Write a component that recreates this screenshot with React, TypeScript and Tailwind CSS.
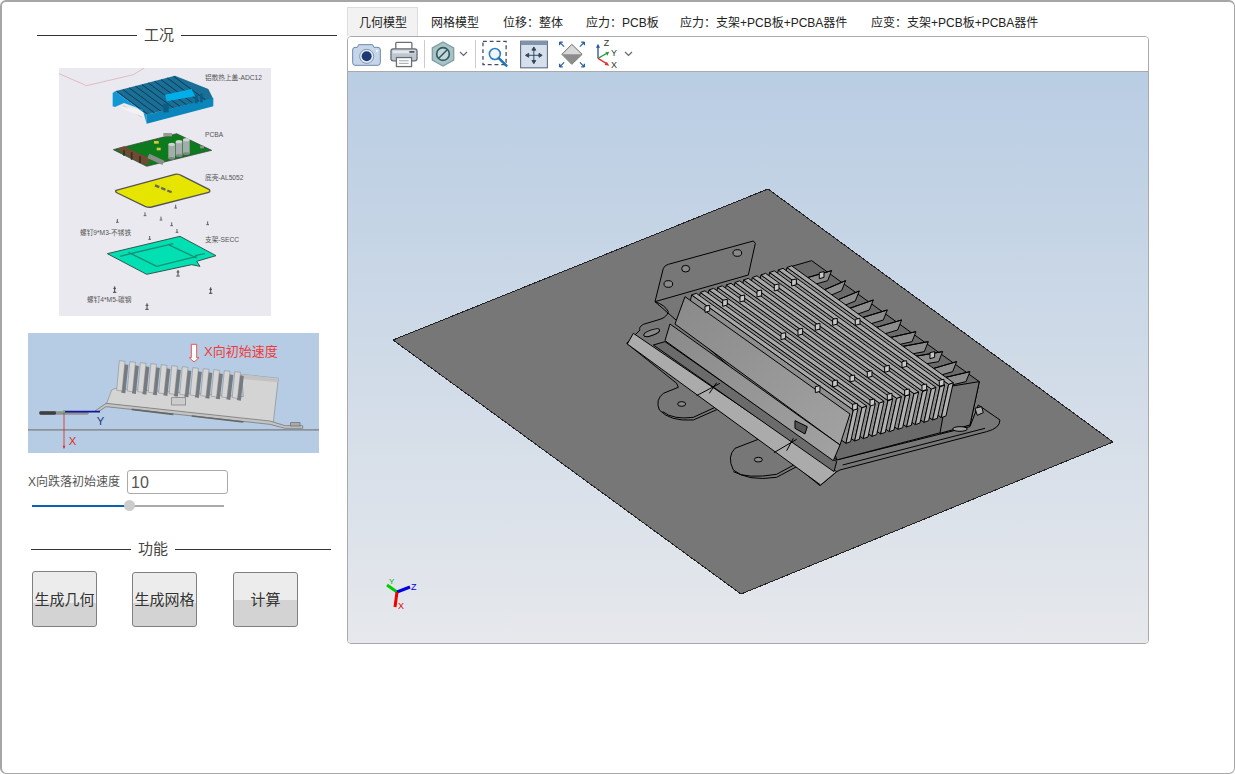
import { useState } from 'react';

const tabs = ['几何模型', '网格模型', '位移：整体', '应力：PCB板', '应力：支架+PCB板+PCBA器件', '应变：支架+PCB板+PCBA器件'];

// 散热片：12 片，从右上往左下画，近的压住远的
const fins = Array.from({ length: 12 }, (_, i) => 11 - i).map((i) => ({
  x0: 215 + i * 26,
  y0: 195 - i * 7.5,
  x1: 700 + i * 26,
  y1: 540 - i * 7,
}));

const pegs = [
  [262, 236], [315, 218], [367, 205], [418, 190], [470, 172], [522, 157], [605, 135],
  [490, 318], [541, 305], [593, 290], [645, 275], [713, 275], [593, 477], [645, 460],
  [697, 445], [749, 432], [801, 416], [853, 402], [937, 375], [705, 530], [757, 517],
  [809, 500], [861, 487], [913, 472], [965, 458],
];

const ledges = [
  [555, 145, 635, 122], [600, 185, 677, 152], [640, 215, 718, 183], [675, 240, 760, 210],
  [720, 265, 802, 240], [760, 295, 845, 270], [800, 325, 888, 305], [845, 350, 925, 335],
  [880, 380, 968, 365], [925, 420, 1010, 395], [965, 445, 1050, 425],
];

function Model() {
  return (
    <svg viewBox="0 0 800 571" className="block h-[571px] w-[800px]">
      <defs>
        <linearGradient id="faceGrad" x1="0" y1="0" x2="1" y2="1">
          <stop offset="0" stopColor="#8a8a8a" />
          <stop offset="1" stopColor="#a2a2a2" />
        </linearGradient>
      </defs>
      <polygon points="45,268 420,117 765,370 393,522" fill="#777777" stroke="#222" strokeWidth="1" shapeRendering="crispEdges" />
      {/* 以下坐标按 3 倍放大图取的 */}
      <g transform="translate(272 158) scale(0.3333)" stroke="#000" strokeWidth="3" strokeLinejoin="round" shapeRendering="crispEdges">
        <path d="M105 215 L130 115 Q134 106 145 103 L400 33 L406 40 L385 135 Z" fill="#777" />
        <ellipse cx="145" cy="162" rx="13" ry="10" fill="#888" />
        <ellipse cx="197" cy="116" rx="12" ry="10" fill="#888" />
        <ellipse cx="352" cy="69" rx="13" ry="10" fill="#888" />
        <path d="M105 215 Q135 225 145 245 Q140 262 120 268 L70 283 Q55 292 60 300 L20 340 L170 460 L175 472 L130 490 Q105 510 118 540 Q150 575 220 570 L295 537 L415 628 L345 655 Q320 680 340 720 Q380 755 470 742 L530 710 L600 767 L650 725 L660 720 L1100 605 Q1140 595 1140 570 L1075 525 L1050 590 L650 690 Z" fill="#777" />
        <path d="M128 545 Q160 570 220 562 L290 530" fill="none" />
        <path d="M340 725 Q380 748 470 733 L525 703" fill="none" />
        <path d="M668 705 L1095 595" fill="none" />
        <ellipse cx="185" cy="522" rx="12" ry="7" fill="#888" />
        <ellipse cx="415" cy="689" rx="12" ry="7" fill="#888" />
        <ellipse cx="95" cy="308" rx="25" ry="8" fill="#888" transform="rotate(-20 95 308)" />
        <polygon points="40,310 650,725 602,765 22,342" fill="#ababab" />
        <polygon points="135,335 650,695 642,725 100,345" fill="#6b6b6b" />
        <path d="M230 497 L300 460 M462 668 L530 628 M268 490 L290 458 M500 662 L520 625" fill="none" />
        <polygon points="505,112 575,92 1078,455 1050,585 650,690 600,500" fill="#6a6a6a" />
        {ledges.map(([a, b, c, d]) => (
          <g key={a}>
            <polygon points={`${a},${b} ${c},${d} ${c - 12},${d + 30} ${a - 12},${b + 30}`} fill="#8c8c8c" />
            <line x1={a} y1={b} x2={c} y2={d} />
          </g>
        ))}
        <polygon points="985,470 1078,455 1050,585 960,610" fill="#747474" />
        {fins.map((f) => (
          <g key={f.x0}>
            <polygon points={`${f.x0},${f.y0} ${f.x1},${f.y1} ${f.x1 - 22},${f.y1 + 100} ${f.x0 - 22},${f.y0 + 100}`} fill="#8e8e8e" />
            <polygon points={`${f.x1},${f.y1} ${f.x1 + 14},${f.y1 - 5} ${f.x1 - 8},${f.y1 + 95} ${f.x1 - 22},${f.y1 + 100}`} fill="#b0b0b0" />
            <polygon points={`${f.x0},${f.y0} ${f.x0 + 14},${f.y0 - 5} ${f.x1 + 14},${f.y1 - 5} ${f.x1},${f.y1}`} fill="#a8a8a8" />
          </g>
        ))}
        <polygon points="195,200 165,282 660,645 690,552" fill="url(#faceGrad)" />
        <polygon points="150,282 135,332 640,692 660,645" fill="url(#faceGrad)" />
        <polygon points="525,572 562,590 555,612 525,595" fill="#555" />
        {pegs.map(([x, y]) => (
          <polygon key={`${x}-${y}`} points={`${x - 7},${y - 7} ${x + 7},${y - 10} ${x + 7},${y + 7} ${x - 7},${y + 11}`} fill="#c8c8c8" />
        ))}
        <polygon points="1065,535 1085,530 1090,548 1072,556" fill="#aaa" />
        <ellipse cx="1020" cy="597" rx="22" ry="7" fill="#999" />
      </g>
      {/* 左下角坐标系 */}
      <g transform="translate(22 505)">
        <line x1="27" y1="15" x2="17" y2="8" stroke="#00cc00" strokeWidth="3" />
        <line x1="27" y1="15" x2="40" y2="10" stroke="#0000e0" strokeWidth="3" />
        <line x1="27" y1="15" x2="25" y2="30" stroke="#f00000" strokeWidth="3" />
        <text x="19" y="7" fontSize="8" fill="#00aa00" fontFamily="Liberation Sans, sans-serif">Y</text>
        <text x="41" y="13" fontSize="9" fill="#0000e0" fontFamily="Liberation Sans, sans-serif">Z</text>
        <text x="28" y="32" fontSize="9" fill="#e00000" fontFamily="Liberation Sans, sans-serif">X</text>
      </g>
    </svg>
  );
}

function Exploded() {
  const labels: [number, number, string][] = [
    [615, 242, '铝散热上盖-ADC12'],
    [615, 413, 'PCBA'],
    [615, 540, '底壳-AL5052'],
    [240, 707, '螺钉9*M3-不锈铁'],
    [615, 727, '支架-SECC'],
    [261, 906, '螺钉4*M5-碳钢'],
  ];
  const smallScrews = [[527, 622], [435, 645], [483, 658], [352, 665], [515, 675], [623, 672], [531, 695], [449, 716]];
  const bigScrews = [[534, 822], [344, 871], [632, 874], [441, 922]];
  const caps = [[505, 434], [527, 426], [549, 420]];
  return (
    <svg viewBox="177 205 636 744" className="block h-[248px] w-[212px] bg-[#e9e9ef]">
      <path d="M177 222 L260 258 L400 225 L433 205" fill="none" stroke="#d8a8a8" strokeWidth="2" />
      <path d="M370 318 L425 352" fill="none" stroke="#d8a8a8" strokeWidth="2" />
      {/* 上盖 */}
      <polygon points="355,320 425,330 432,352 372,330" fill="#f2f2f2" />
      <polygon points="345,275 525,228 625,268 640,298 440,345" fill="#1a6f96" />
      {Array.from({ length: 10 }, (_, i) => (
        <line key={i} x1={350 + i * 19} y1={275 - i * 5} x2={445 + i * 19} y2={345 - i * 5} stroke="#0c3a55" strokeWidth="3" />
      ))}
      <polygon points="338,280 345,275 440,345 440,372 428,330 372,310 345,322 338,320" fill="#1296d4" />
      <polygon points="440,345 640,295 640,320 440,372" fill="#0a86bd" />
      <polygon points="495,285 575,268 585,290 500,305" fill="#00aee8" />
      <rect x="490" y="312" width="16" height="26" fill="#0a5d85" />
      <rect x="585" y="285" width="8" height="26" fill="#0a5d85" />
      <rect x="600" y="282" width="8" height="26" fill="#0a5d85" />
      {/* PCBA */}
      <polygon points="340,450 530,402 635,452 440,500" fill="#0d7a1d" stroke="#333" strokeWidth="2" />
      <polygon points="348,447 372,440 448,475 445,497 420,490" fill="#6e4b33" />
      <path d="M372 452 L372 468 M395 458 L395 480 M420 470 L420 490" stroke="#3b2a1d" strokeWidth="5" />
      <rect x="448" y="462" width="50" height="14" fill="#8a8f8a" transform="rotate(25 448 462)" />
      <rect x="490" y="400" width="26" height="10" fill="#9a9a9a" />
      {caps.map(([x, y]) => (
        <g key={x}>
          <rect x={x} y={y} width="20" height="42" fill="#a6acae" />
          <ellipse cx={x + 10} cy={y} rx="10" ry="5" fill="#d0d4d6" />
          <ellipse cx={x + 10} cy={y + 42} rx="10" ry="4" fill="#7f8587" />
        </g>
      ))}
      <rect x="462" y="424" width="14" height="8" fill="#d8c53a" />
      <rect x="470" y="444" width="12" height="8" fill="#d8c53a" />
      <rect x="600" y="438" width="12" height="8" fill="#8a8f8a" />
      {/* 底壳 */}
      <path d="M348 572 L525 524 Q535 522 545 528 L628 570 Q632 574 626 578 L455 622 Q445 624 435 620 L352 580 Q344 576 348 572 Z" fill="#e5e500" stroke="#555" strokeWidth="4" />
      <path d="M465 557 L520 580" stroke="#666" strokeWidth="7" strokeDasharray="14 6" />
      {/* 支架 */}
      <polygon points="322,762 540,710 648,768 590,785 600,800 575,795 440,824" fill="#00e0b2" stroke="#33564d" strokeWidth="3" />
      <path d="M385 758 L470 800 M505 735 L590 775 M400 760 L520 732 M470 800 L590 770 M360 770 L400 760 M585 768 L615 762" stroke="#1a8f76" strokeWidth="4" fill="none" />
      {smallScrews.map(([x, y]) => (
        <path key={`${x}-${y}`} d={`M${x} ${y - 7} V${y + 2} M${x - 4} ${y + 3} H${x + 4}`} stroke="#444" strokeWidth="2.5" />
      ))}
      {bigScrews.map(([x, y]) => (
        <path key={`${x}-${y}`} d={`M${x} ${y - 11} V${y + 6} M${x - 5} ${y + 7} H${x + 5} M${x - 4} ${y - 5} H${x + 4}`} stroke="#444" strokeWidth="3" />
      ))}
      {labels.map(([x, y, t]) => (
        <text key={t} x={x} y={y} fontSize="20" fill="#555" fontFamily="'Liberation Sans','Noto Sans CJK SC',sans-serif">{t}</text>
      ))}
    </svg>
  );
}

function SideView() {
  const sideFins = Array.from({ length: 12 }, (_, i) => 358 + i * 31.5);
  return (
    <svg viewBox="84 24 873 360" className="block h-[120px] w-[291px] bg-[#b6cce4]">
      <rect x="84" y="312" width="873" height="5" fill="#8b9096" />
      <polygon points="345,190 730,215 725,148 835,160 820,292 320,236 335,195" fill="#d4d4d4" stroke="#8a8a8a" strokeWidth="2" />
      <polygon points="726,148 835,160 834,172 727,162" fill="#c2c2c2" />
      {sideFins.map((x, i) => (
        <g key={x}>
          <polygon points={`${x + 15},${118 + i * 3} ${x + 27},${120 + i * 3} ${x + 18},${205 + i * 2} ${x + 6},${203 + i * 2}`} fill="#777b7f" />
          <polygon points={`${x},${107 + i * 3} ${x + 17},${109 + i * 3} ${x + 8},${198 + i * 2} ${x - 8},${196 + i * 2}`} fill="#d6d6d6" stroke="#808080" strokeWidth="1.5" />
        </g>
      ))}
      <rect x="515" y="218" width="42" height="22" fill="#ccc" stroke="#777" strokeWidth="2" />
      <path d="M285 258 L318 235 L810 288 L855 302 L908 302 L908 310 L855 310 L810 298 L318 245 L295 260 Z" fill="#c4c4c4" stroke="#6a6a6a" strokeWidth="2" />
      <path d="M395 253 L520 268 M575 273 L730 291" stroke="#666" strokeWidth="5" />
      <rect x="872" y="293" width="28" height="10" fill="#aaa" stroke="#666" strokeWidth="2" />
      <rect x="118" y="259" width="148" height="10" rx="4" fill="#8f9194" />
      <rect x="118" y="259" width="50" height="10" rx="4" fill="#3e4042" />
      <line x1="190" y1="260" x2="300" y2="260" stroke="#16159a" strokeWidth="5" />
      <line x1="192" y1="260" x2="192" y2="368" stroke="#e02a2a" strokeWidth="2.5" />
      <polygon points="188,362 196,362 192,373" fill="#e02a2a" />
      <circle cx="192" cy="260" r="3.5" fill="#3fd63f" />
      <text x="290" y="299" fontSize="34" fill="#24357f" fontFamily="Liberation Sans, sans-serif">Y</text>
      <text x="206" y="360" fontSize="34" fill="#e02a2a" fontFamily="Liberation Sans, sans-serif">X</text>
      <path d="M574 58 H590 V98 H597 L582 111 L568 98 H574 Z" fill="#fff" stroke="#ee3a3a" strokeWidth="2.5" />
      <text x="612" y="94" fontSize="39" fill="#ee3a3a" fontFamily="'Liberation Sans','Noto Sans CJK SC',sans-serif">X向初始速度</text>
    </svg>
  );
}

function SectionTitle({ title, right, text }: { title: string; right: string; text: string }) {
  return (
    <div className="flex items-center">
      <div className="h-px w-[100px] bg-[#333]" />
      <span className={`leading-[20px] text-[#444] ${text}`}>{title}</span>
      <div className={`h-px bg-[#333] ${right}`} />
    </div>
  );
}

function ActionButton({ label, className }: { label: string; className: string }) {
  return (
    <button className={`flex w-[65px] items-center justify-center rounded-[3px] border border-[#808080] pt-[2px] text-[15px] whitespace-nowrap text-[#333] ${className}`}>
      {label}
    </button>
  );
}

function Chevron() {
  return (
    <svg width="9" height="6" viewBox="0 0 9 6" className="shrink-0">
      <path d="M1 1 L4.5 4.5 L8 1" fill="none" stroke="#667" strokeWidth="1.2" />
    </svg>
  );
}

function Toolbar() {
  return (
    <div className="flex h-[35px] items-center border-b border-[#aaa] bg-white pl-1">
      {/* 相机 */}
      <svg width="29" height="24" viewBox="0 0 87 72">
        <path d="M20 8 H62 L66 16 H78 Q85 16 85 24 V62 Q85 70 77 70 H9 Q2 70 2 62 V24 Q2 16 9 16 H16 Z" fill="#c5d6ea" stroke="#6d88ab" strokeWidth="3" />
        <circle cx="44" cy="43" r="21" fill="#e9f0f8" stroke="#7d93b3" strokeWidth="3" />
        <circle cx="44" cy="43" r="15" fill="#1d3a74" />
        <circle cx="75" cy="27" r="3" fill="#fff" />
      </svg>
      {/* 打印机 */}
      <svg width="28" height="27" viewBox="0 0 87 81" className="ml-[9px]">
        <rect x="18" y="3" width="50" height="24" rx="3" fill="#fff" stroke="#666e78" strokeWidth="4" />
        <rect x="3" y="23" width="81" height="37" rx="7" fill="#bfc6ce" stroke="#666e78" strokeWidth="4" />
        <rect x="8" y="28" width="71" height="9" fill="#e4e8ec" />
        <rect x="60" y="30" width="16" height="5" fill="#3d4650" />
        <rect x="20" y="50" width="47" height="28" fill="#fff" stroke="#666e78" strokeWidth="4" />
        <path d="M28 60 H58 M28 68 H58" stroke="#9aa2aa" strokeWidth="3" />
      </svg>
      <div className="ml-[6px] h-[28px] w-px bg-[#ccc]" />
      {/* 显示/隐藏 */}
      <svg width="24" height="26" viewBox="0 0 72 78" className="ml-[6px]">
        <polygon points="36,3 68,21 68,57 36,75 4,57 4,21" fill="#a9c2c6" stroke="#7f9da2" strokeWidth="4" />
        <circle cx="36" cy="39" r="19" fill="#c5d6d8" stroke="#2f5c63" strokeWidth="5" />
        <line x1="24" y1="51" x2="48" y2="27" stroke="#2f5c63" strokeWidth="5" />
      </svg>
      <div className="ml-1 flex"><Chevron /></div>
      <div className="ml-[7px] h-[28px] w-px bg-[#ccc]" />
      {/* 框选放大 */}
      <svg width="27" height="28" viewBox="0 0 84 84" className="ml-[6px]">
        <rect x="3" y="3" width="72" height="72" fill="none" stroke="#3c4f66" strokeWidth="4" strokeDasharray="12 9" />
        <circle cx="40" cy="42" r="17" fill="#eef5fb" stroke="#2f7fc0" strokeWidth="5" />
        <line x1="52" y1="55" x2="76" y2="78" stroke="#1f74b8" strokeWidth="8" strokeLinecap="round" />
      </svg>
      {/* 适应窗口 */}
      <svg width="28" height="29" viewBox="0 0 87 87" className="ml-[11px]">
        <rect x="2" y="2" width="83" height="83" fill="#d6e0ec" stroke="#4a5a70" strokeWidth="3" />
        <rect x="2" y="2" width="83" height="12" fill="#7f93ad" />
        <g fill="#33465c" stroke="#33465c" strokeWidth="3">
          <path d="M43 24 V68 M21 46 H65" fill="none" />
          <polygon points="43,20 37,30 49,30" />
          <polygon points="43,72 37,62 49,62" />
          <polygon points="17,46 27,40 27,52" />
          <polygon points="69,46 59,40 59,52" />
        </g>
      </svg>
      {/* 缩放到视图 */}
      <svg width="28" height="29" viewBox="0 0 87 87" className="ml-[10px]">
        <polygon points="43,12 75,43 43,74 12,43" fill="#d8d8d8" stroke="#666" strokeWidth="3" />
        <polygon points="43,43 75,43 43,74 12,43" fill="#8c8c8c" />
        <g stroke="#2c5f9e" strokeWidth="4" fill="none">
          <path d="M5 5 L19 19 M5 5 H15 M5 5 V15" />
          <path d="M82 5 L68 19 M82 5 H72 M82 5 V15" />
          <path d="M5 82 L19 68 M5 82 H15 M5 82 V72" />
          <path d="M82 82 L68 68 M82 82 H72 M82 82 V72" />
        </g>
      </svg>
      {/* 坐标轴 */}
      <svg width="24" height="30" viewBox="0 0 72 90" className="ml-[9px]">
        <line x1="9" y1="58" x2="9" y2="22" stroke="#2450a8" strokeWidth="4" />
        <polygon points="9,14 3,26 15,26" fill="#2450a8" />
        <line x1="9" y1="58" x2="37" y2="42" stroke="#2a9a3c" strokeWidth="4" />
        <polygon points="43,38 31,40 37,50" fill="#2a9a3c" />
        <line x1="9" y1="58" x2="35" y2="74" stroke="#e03030" strokeWidth="4" />
        <polygon points="43,80 29,78 35,68" fill="#e03030" />
        <text x="26" y="22" fontSize="27" fill="#333" fontFamily="Liberation Sans, sans-serif">Z</text>
        <text x="48" y="50" fontSize="27" fill="#333" fontFamily="Liberation Sans, sans-serif">Y</text>
        <text x="48" y="86" fontSize="27" fill="#333" fontFamily="Liberation Sans, sans-serif">X</text>
      </svg>
      <div className="ml-[5px] flex"><Chevron /></div>
    </div>
  );
}

export default function App() {
  const [speed] = useState(10);
  const tabWidths = ['w-[71px] pl-[11px]', 'w-[73px] pl-[13px]', 'w-[83px] pl-[12px]', 'w-[94px] pl-[12px]', 'w-[191px] pl-[12px]', 'w-auto pl-[12px]'];

  return (
    <div className="h-[774px] w-[1235px] overflow-hidden rounded-md border-t-2 border-r border-b border-l-2 border-[#a6a6a6] bg-white font-['Liberation_Sans','Noto_Sans_CJK_SC',sans-serif]">
      <div className="flex">
        {/* 左侧参数 */}
        <div className="w-[345px] shrink-0">
          <div className="mt-[23px] ml-[35px]">
            <SectionTitle title="工况" right="w-[156px]" text="px-[7px] text-[15px]" />
          </div>
          <div className="mt-[23px] ml-[57px]">
            <Exploded />
          </div>
          <div className="mt-[17px] ml-[26px]">
            <SideView />
          </div>
          <div className="mt-[17px] ml-[26px] flex items-center gap-[7px]">
            <span className="text-[12px] text-[#555]">X向跌落初始速度</span>
            <div className="flex h-[24px] w-[101px] items-center rounded-[3px] border border-[#aaa] px-[3px] pt-[2px] text-[16px] text-[#555]">{speed}</div>
          </div>
          <div className="relative mt-[11px] ml-[30px] h-[2px] w-[192px] bg-[#aaa]">
            <div className="h-full w-[93px] bg-[#0a62b5]" />
            <div className="absolute top-[-5px] left-[92px] h-[11px] w-[11px] rounded-full bg-[#cccccc]" />
          </div>
          <div className="mt-[32px] ml-[29px]">
            <SectionTitle title="功能" right="w-[156px]" text="px-[7px] text-[15px]" />
          </div>
          <div className="mt-[12px] ml-[30px] flex items-end gap-[35px]">
            <ActionButton label="生成几何" className="h-[56px] bg-[linear-gradient(#ececec_57%,#d3d3d3_57%)]" />
            <ActionButton label="生成网格" className="h-[55px] bg-[linear-gradient(#ececec_57%,#d3d3d3_57%)]" />
            <div className="ml-px">
              <ActionButton label="计算" className="h-[55px] bg-[linear-gradient(#ececec_50%,#d3d3d3_50%)]" />
            </div>
          </div>
        </div>

        {/* 右侧视图 */}
        <div className="w-[802px] shrink-0 pt-[5px]">
          <div className="flex h-[29px] items-center text-[12px] text-[#222]">
            {tabs.map((t, i) => (
              <div
                key={t}
                className={`flex h-full items-center pt-[2px] whitespace-nowrap ${tabWidths[i]} ${i === 0 ? 'border-x border-t border-[#ddd] bg-[#f2f2f2]' : ''}`}
              >
                {t}
              </div>
            ))}
          </div>
          <div className="w-[802px] overflow-hidden rounded-sm border border-[#aaa]">
            <Toolbar />
            <div className="h-[571px] bg-[linear-gradient(#b9cde3,#e6e8ec)]">
              <Model />
            </div>
          </div>
        </div>
      </div>
    </div>
  );
}
